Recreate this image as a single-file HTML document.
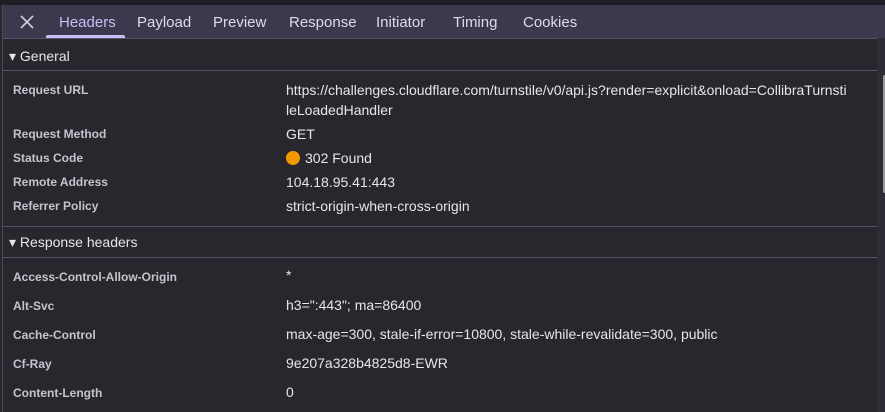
<!DOCTYPE html>
<html><head><style>
body{margin:0;width:885px;height:412px;overflow:hidden;background:#28272e;font-family:"Liberation Sans",sans-serif;position:relative}
.top{position:absolute;left:0;top:0;width:885px;height:5px;background:#1f1e24}
.lb{position:absolute;left:2px;top:5px;width:1px;height:407px;background:#4a4956}
.tabs{position:absolute;left:3px;top:5px;width:882px;height:33px;background:#3a394d;border-bottom:1px solid #555466}
.tab{position:absolute;top:14px;font-size:15px;color:#dcdcea}
.ul{position:absolute;left:46px;top:35px;width:79px;height:3px;background:#c6bff7;border-radius:2px 2px 0 0}
.sec{position:absolute;left:3px;width:874px;height:1px;background:#555466}
.h{position:absolute;left:9px;font-size:14px;color:#e6e6ea}
.k{position:absolute;left:13px;font-size:12px;font-weight:bold;color:#c4c4cc}
.v{position:absolute;left:286px;font-size:14px;color:#e6e6ea;white-space:nowrap}
.sb{position:absolute;left:877px;top:38px;width:8px;height:374px;background:#2e2d35}
.th{position:absolute;left:883px;top:75px;width:3px;height:118px;background:#9a9a9f;border-radius:2px}
</style></head><body>
<div class="top"></div>
<div class="tabs"></div>
<div class="lb"></div>
<svg style="position:absolute;left:20px;top:15px" width="14" height="14"><path d="M1 1L13 13M13 1L1 13" stroke="#d0d0d8" stroke-width="1.6"/></svg>
<div class="tab" style="left:59px;color:#c6bff7">Headers</div>
<div class="tab" style="left:137px">Payload</div>
<div class="tab" style="left:213px">Preview</div>
<div class="tab" style="left:289px">Response</div>
<div class="tab" style="left:376px">Initiator</div>
<div class="tab" style="left:453px">Timing</div>
<div class="tab" style="left:523px">Cookies</div>
<div class="ul"></div>
<div class="h" style="top:48px">▾ General</div>
<div class="sec" style="top:70px"></div>
<div class="k" style="top:83px">Request URL</div>
<div class="v" style="top:82px">https://challenges.cloudflare.com/turnstile/v0/api.js?render=explicit&amp;onload=CollibraTurnsti</div>
<div class="v" style="top:102px">leLoadedHandler</div>
<div class="k" style="top:127px">Request Method</div><div class="v" style="top:126px">GET</div>
<div class="k" style="top:151px">Status Code</div>
<div class="v" style="top:150px"><span style="display:inline-block;width:14px;height:14px;border-radius:50%;background:#f29900;vertical-align:-2px;margin-right:5px"></span>302 Found</div>
<div class="k" style="top:175px">Remote Address</div><div class="v" style="top:174px">104.18.95.41:443</div>
<div class="k" style="top:199px">Referrer Policy</div><div class="v" style="top:198px">strict-origin-when-cross-origin</div>
<div class="sec" style="top:226px"></div>
<div class="h" style="top:234px">▾ Response headers</div>
<div class="sec" style="top:257px"></div>
<div class="k" style="top:270px">Access-Control-Allow-Origin</div><div class="v" style="top:267px">*</div>
<div class="k" style="top:299px">Alt-Svc</div><div class="v" style="top:297px">h3=":443"; ma=86400</div>
<div class="k" style="top:328px">Cache-Control</div><div class="v" style="top:326px">max-age=300, stale-if-error=10800, stale-while-revalidate=300, public</div>
<div class="k" style="top:357px">Cf-Ray</div><div class="v" style="top:355px">9e207a328b4825d8-EWR</div>
<div class="k" style="top:386px">Content-Length</div><div class="v" style="top:384px">0</div>
<div class="sb"></div><div class="th"></div>
</body></html>
